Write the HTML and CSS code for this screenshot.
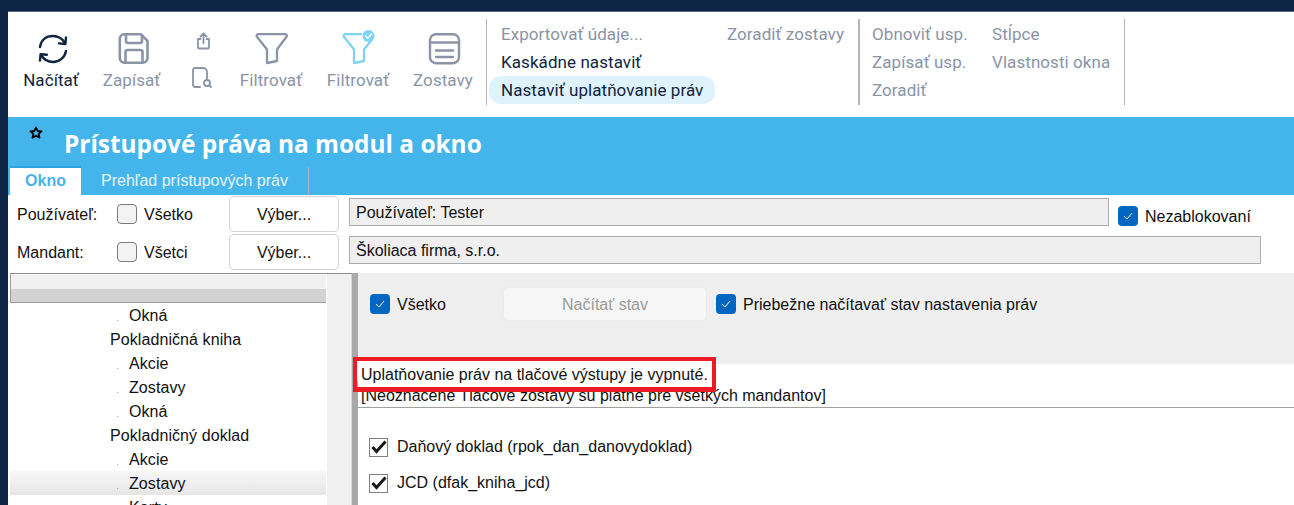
FILE: index.html
```html
<!DOCTYPE html>
<html lang="sk">
<head>
<meta charset="utf-8">
<title>Prístupové práva na modul a okno</title>
<link rel="stylesheet" href="styles.css">
</head>
<body>
<div class="app">
  <header class="toolbar">
    <div class="big-buttons">
      <div class="tool active tool-load">
        <svg width="36" height="36" viewBox="0 0 36 36" fill="none" stroke="#10243f" stroke-width="2.4" stroke-linecap="round" stroke-linejoin="round"><path d="M7 17C8 10 13 6 20 6c5.500 0 9.500 3 12 7"/><path d="M33 7.500l-.6 6.500-6.400-.6"/><path d="M33 21c-1.200 6.500-6.500 11-13 11-5.500 0-9.500-3-12-7"/><path d="M7 30.500l.6-6.300 6.300.5"/></svg>
        <span>Načítať</span>
      </div>
      <div class="tool tool-save">
        <svg width="36" height="36" viewBox="0 0 36 36" fill="none" stroke="#8a94a6" stroke-width="2.6" stroke-linejoin="round"><path d="M10 4.300h17l6.500 6.500V28a4.700 4.700 0 0 1-4.700 4.700H10A4.700 4.700 0 0 1 5.800 28V9A4.700 4.700 0 0 1 10 4.300z"/><path d="M12 4.300v6.700a2 2 0 0 0 2 2h12a2 2 0 0 0 2-2V4.300"/><path d="M11.500 32.700V22a2 2 0 0 1 2-2h13a2 2 0 0 1 2 2v10.700"/></svg>
        <span>Zapísať</span>
      </div>
      <div class="tool-stack">
        <svg class="share" width="15" height="18" viewBox="0 0 15 18" fill="none" stroke="#8a94a6" stroke-width="1.800" stroke-linecap="round" stroke-linejoin="round"><path d="M4.500 7H2v8.500a1 1 0 0 0 1 1h9a1 1 0 0 0 1-1V7h-2.500"/><path d="M7.500 11V1.500M4.500 4.500l3-3 3 3"/></svg>
        <svg width="20" height="21" viewBox="0 0 20 21" fill="none" stroke="#8a94a6" stroke-width="1.800" stroke-linecap="round" stroke-linejoin="round"><path d="M8 20H3a2 2 0 0 1-2-2V3a2 2 0 0 1 2-2h8a4 4 0 0 1 4 4v7"/><circle cx="15" cy="16" r="3"/><path d="M17.300 18.300L19 20"/></svg>
      </div>
      <div class="tool tool-filter">
        <svg width="36" height="36" viewBox="0 0 36 36" fill="none" stroke="#8a94a6" stroke-width="2.3" stroke-linejoin="round"><path d="M5 4.200h27.500a1.500 1.500 0 0 1 1 2.500L24 19.500V31l-10 2V19.500L4 6.700a1.500 1.500 0 0 1 1-2.500z"/></svg>
        <span>Filtrovať</span>
      </div>
      <div class="tool tool-filter2">
        <svg width="36" height="36" viewBox="0 0 36 36" fill="none" stroke="#7ed3f6" stroke-width="2.3" stroke-linejoin="round"><path d="M22 4.200H5a1.500 1.500 0 0 0-1 2.500L14 19.500V33l10-2V19.500l8-10"/><circle cx="28.500" cy="6" r="6" fill="#7ed3f6" stroke="none"/><path d="M25.500 6l2.300 2.300L31.500 4" stroke="#fff" stroke-width="1.500" stroke-linecap="round"/></svg>
        <span>Filtrovať</span>
      </div>
      <div class="tool tool-reports">
        <svg width="36" height="36" viewBox="0 0 36 36" fill="none" stroke="#8a94a6" stroke-width="2.400" stroke-linecap="round"><rect x="5" y="4.200" width="29" height="29" rx="6"/><path d="M5 12.500h29M11 20.500h17M11 27h17"/></svg>
        <span>Zostavy</span>
      </div>
    </div>
    <div class="menu-group menu-a">
      <div class="menu-col">
        <span class="item">Exportovať údaje...</span>
        <span class="item dark">Kaskádne nastaviť</span>
        <span class="item dark pill">Nastaviť uplatňovanie práv</span>
      </div>
      <div class="menu-col">
        <span class="item">Zoradiť zostavy</span>
      </div>
    </div>
    <div class="menu-group menu-b">
      <div class="menu-col">
        <span class="item">Obnoviť usp.</span>
        <span class="item">Zapísať usp.</span>
        <span class="item">Zoradiť</span>
      </div>
      <div class="menu-col">
        <span class="item">Stĺpce</span>
        <span class="item">Vlastnosti okna</span>
      </div>
    </div>
  </header>

  <section class="title-band">
    <div class="title-row">
      <svg class="star" width="14" height="14" viewBox="0 0 14 14" fill="none" stroke="#000" stroke-width="1.800" stroke-linejoin="round"><path d="M7 1.500l1.600 3.500 3.900.4-2.900 2.500.9 3.800L7 9.700l-3.500 2 .9-3.800L1.500 5.400l3.900-.4z"/></svg>
      <h1>Prístupové práva na modul a okno</h1>
    </div>
    <nav class="tabs">
      <span class="tab current">Okno</span>
      <span class="tab">Prehľad prístupových práv</span>
    </nav>
  </section>

  <section class="filters">
    <div class="filter-row">
      <span class="filter-label">Používateľ:</span>
      <span class="box empty"></span>
      <span class="filter-check">Všetko</span>
      <span class="btn">Výber...</span>
      <span class="field field-short">Používateľ: Tester</span>
      <span class="box blue"><svg width="12" height="10" viewBox="0 0 12 10" fill="none" stroke="#fff" stroke-width="1"><path d="M2 5l3 3 5-6"/></svg></span>
      <span class="after-label">Nezablokovaní</span>
    </div>
    <div class="filter-row">
      <span class="filter-label">Mandant:</span>
      <span class="box empty"></span>
      <span class="filter-check">Všetci</span>
      <span class="btn">Výber...</span>
      <span class="field field-long">Školiaca firma, s.r.o.</span>
    </div>
  </section>

  <main class="workspace">
    <aside class="tree-pane">
      <div class="tree">
        <div class="tree-head"></div>
        <ul class="tree-list">
          <li class="leaf">Okná</li>
          <li class="node">Pokladničná kniha</li>
          <li class="leaf">Akcie</li>
          <li class="leaf">Zostavy</li>
          <li class="leaf">Okná</li>
          <li class="node">Pokladničný doklad</li>
          <li class="leaf">Akcie</li>
          <li class="leaf selected">Zostavy</li>
          <li class="leaf">Karty</li>
        </ul>
      </div>
      <div class="scrollbar"></div>
    </aside>
    <div class="splitter"></div>
    <div class="detail">
      <div class="detail-top">
        <span class="box blue"><svg width="12" height="10" viewBox="0 0 12 10" fill="none" stroke="#fff" stroke-width="1"><path d="M2 5l3 3 5-6"/></svg></span>
        <span class="all-label">Všetko</span>
        <span class="btn-disabled">Načítať stav</span>
        <span class="box blue"><svg width="12" height="10" viewBox="0 0 12 10" fill="none" stroke="#fff" stroke-width="1"><path d="M2 5l3 3 5-6"/></svg></span>
        <span class="after-label">Priebežne načítavať stav nastavenia práv</span>
      </div>
      <div class="notice">
        <p class="notice-main">Uplatňovanie práv na tlačové výstupy je vypnuté.</p>
        <p>[Neoznačené Tlačové zostavy sú platné pre všetkých mandantov]</p>
        <div class="highlight"></div>
      </div>
      <div class="report-list">
        <label class="report"><span class="tick"><svg width="16" height="14" viewBox="0 0 16 14" fill="none" stroke="#1a1a1a" stroke-width="3"><path d="M1.500 7l4 4.500 9-10"/></svg></span>Daňový doklad (rpok_dan_danovydoklad)</label>
        <label class="report"><span class="tick"><svg width="16" height="14" viewBox="0 0 16 14" fill="none" stroke="#1a1a1a" stroke-width="3"><path d="M1.500 7l4 4.500 9-10"/></svg></span>JCD (dfak_kniha_jcd)</label>
      </div>
    </div>
  </main>
</div>
</body>
</html>
```
FILE: styles.css
```css
* { box-sizing: border-box; }
html, body { margin: 0; height: 100%; overflow: hidden; }
body { background: #0f2545; font-family: "Liberation Sans", Arial, sans-serif; font-size: 16px; color: #111; }
.app { margin: 11px 0 0 8px; height: 494px; background: #fff; overflow: hidden; display: flex; flex-direction: column; border-top: 1px solid #56657c; }

.toolbar { height: 105px; flex: none; display: flex; font-family: Roboto, sans-serif; font-size: 17px; letter-spacing: 0.07px; color: #8a94a6; padding-top: 7px; }
.big-buttons { display: flex; width: 472px; flex: none; }
.tool { display: flex; flex-direction: column; align-items: center; height: 80px; flex: none; }
.tool svg { margin-top: 11px; flex: none; }
.tool span { margin-top: 4px; line-height: 20px; white-space: nowrap; }
.tool.active { color: #10243f; }
.tool-load { width: 56px; margin-left: 15px; }
.tool-save { width: 60px; margin-left: 22.500px; }
.tool-stack { width: 22px; margin-left: 29.500px; display: flex; flex-direction: column; align-items: center; gap: 17px; padding-top: 13px; flex: none; }
.share { margin-left: 2px; }
.tool-filter { width: 64px; margin-left: 26px; }
.tool-filter2 { width: 64px; margin-left: 23px; }
.tool-reports { width: 60px; margin-left: 23px; }

.menu-group { display: flex; height: 86px; padding-top: 1px; border-left: 1px solid #b5b5b5; flex: none; }
.menu-a { width: 372px; margin-left: 6px; padding-left: 2px; }
.menu-b { width: 267px; border-left-width: 2px; border-right: 1px solid #b5b5b5; }
.menu-col { display: flex; flex-direction: column; align-items: flex-start; }
.menu-a .menu-col:first-child { width: 226px; }
.menu-b .menu-col:first-child { width: 132px; padding-left: 12px; }
.item { height: 28px; line-height: 28px; padding: 0 12px; white-space: nowrap; }
.menu-b .item { padding: 0; }
.dark { color: #10243f; }
.pill { background: #dff3fd; border-radius: 12px; }

.title-band { flex: none; height: 78px; background: #44b5ea; display: flex; flex-direction: column; justify-content: space-between; }
.title-row { display: flex; padding: 8px 0 0 21px; }
.star { margin-top: 1px; }
h1 { margin: 0 0 0 21px; font-family: "Open Sans", sans-serif; font-size: 24.400px; font-weight: 700; line-height: 38px; color: #fff; }
.tabs { display: flex; height: 29px; padding-left: 2px; }
.tab { padding: 0 20px 0 20px; line-height: 28px; color: #e6f6fe; border-right: 1px solid #9cb6c4; height: 28px; margin-top: 1px; white-space: nowrap; }
.tab.current { background: #fff; color: #44b5ea; font-weight: 700; border-right: 0; border-top: 2px solid #2fa4dc; line-height: 25px; padding: 0; text-align: center; height: 29px; margin: 0; width: 71px; }

.filters { flex: none; height: 78px; padding-top: 1px; display: flex; flex-direction: column; gap: 2px; }
.filter-row { display: flex; align-items: center; height: 36px; padding-left: 9px; }
.filter-label { width: 100px; flex: none; padding-top: 2px; }
.box { width: 20px; height: 20px; border-radius: 4px; flex: none; display: flex; align-items: center; justify-content: center; }
.box.empty { background: #f3f3f3; border: 1px solid #7a7a7a; }
.box.blue { background: #0067c0; }
.filter-check { margin-left: 7px; width: 85px; flex: none; padding-top: 2px; }
.btn { width: 110px; height: 36px; padding-top: 2px; background: #fff; border: 1px solid #d3d3d3; border-radius: 5px; display: flex; align-items: center; justify-content: center; flex: none; }
.field { align-self: flex-start; margin-top: 2px; height: 28px; background: #efefef; border: 1px solid #acacac; margin-left: 10px; padding: 1px 0 0 6px; line-height: 26px; flex: none; }
.field-short { width: 760px; }
.field-long { width: 912px; }
.filter-row > .box.blue { margin-left: 9px; margin-top: 4px; }
.filter-row > .after-label { margin-top: 6px; }
.after-label { margin-left: 7px; white-space: nowrap; }

.workspace { flex: 1; display: flex; min-height: 0; }
.tree-pane { width: 342px; flex: none; margin-left: 2px; display: flex; border-top: 1px solid #8c8c8c; }
.tree { width: 316px; flex: none; overflow: hidden; }
.tree-head { height: 29px; border: 1px solid #9c9c9c; border-top: 1px solid #fff; border-right: 0; background: linear-gradient(#f0f0f0 0 14px, #d2d2d2 14px); }
.tree-list { list-style: none; margin: 0; padding: 0; letter-spacing: 0.08px; }
.tree-list li { height: 24px; line-height: 24px; padding-top: 1px; }
.node { padding-left: 100px; }
.leaf { padding-left: 119px; position: relative; }
.leaf::before { content: ""; position: absolute; left: 107px; top: 17px; width: 1px; height: 1px; background: #aaa; }
.selected { background: linear-gradient(#f7f7f7, #e6e6e6); }
.scrollbar { width: 26px; flex: none; background: #f0f0f0; border-left: 1px solid #fff; border-right: 1px solid #d8d8d8; }
.splitter { width: 6px; flex: none; background: #a9a9a9; }

.detail { flex: 1; min-width: 0; }
.detail-top { height: 91px; background: #efefef; display: flex; align-items: flex-start; padding: 21px 0 0 12px; }
.all-label { margin-left: 7px; width: 106px; flex: none; line-height: 22px; }
.detail-top .after-label { line-height: 22px; }
.btn-disabled { width: 204px; height: 34px; margin: -7px 9px 0 0; background: #f6f6f6; border: 1px solid #eaeaea; border-radius: 4px; color: #9a9a9a; text-align: center; line-height: 34px; flex: none; }
.notice { position: relative; height: 44px; border-bottom: 1px solid #a0a0a0; padding-left: 3px; }
.notice p { margin: 0; height: 22px; line-height: 20px; white-space: nowrap; }
.notice .notice-main { position: relative; z-index: 1; line-height: 22px; }
.highlight { position: absolute; left: -5px; top: -7px; width: 363px; height: 35px; background: linear-gradient(#fff 0 20px, transparent 20px); border: solid #ed1c24; border-width: 4px 4px 5px; }
.report-list { padding: 29px 0 0 11px; display: flex; flex-direction: column; gap: 16px; }
.report { display: flex; align-items: center; height: 20px; gap: 9px; }
.tick { width: 19px; height: 19px; border: 1px solid #808080; display: flex; align-items: center; justify-content: center; background: #fff; flex: none; }
```
